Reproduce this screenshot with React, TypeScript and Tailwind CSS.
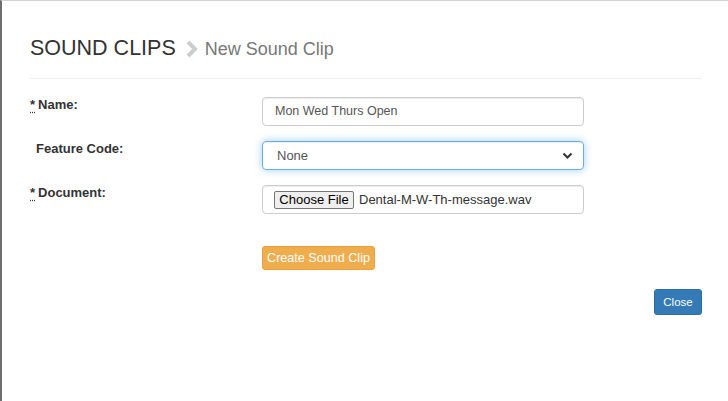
import React from "react";

const font = { fontFamily: '"Liberation Sans", Arial, sans-serif' };

const Req = () => (
  <abbr title="required" className="no-underline decoration-dotted underline underline-offset-[3px] mr-[3px]">
    *
  </abbr>
);

const App = () => {
  return (
    <div
      className="w-[728px] h-[401px] bg-white border-l-2 border-l-[#6e6e6e] border-t border-t-[#d2d2d2] text-[#333] overflow-hidden"
      style={font}
    >
      <div className="pl-[28px] pr-[26px]">
        {/* Titre */}
        <div className="h-[78px] pt-[34px] border-b border-[#eeeeee] flex items-start">
          <div className="flex items-center h-[26px]">
            <h3 className="text-[21.5px] leading-[26px] font-normal text-[#333]">SOUND CLIPS</h3>
            <svg width="14" height="18" viewBox="0 0 14 18" className="ml-[9px] mt-[1px]">
              <polyline points="3,2 10,9 3,16" fill="none" stroke="#cccccc" strokeWidth="4" />
            </svg>
            <span className="ml-[6px] text-[18px] leading-[26px] text-[#777] mt-[2px]">New Sound Clip</span>
          </div>
        </div>

        {/* Formulaire */}
        <div className="mt-[18px] flex flex-col gap-[15px]">
          <div className="flex">
            <label className="w-[232px] text-[13px] leading-[16px] font-bold">
              <Req />Name:
            </label>
            <div className="w-[322px] h-[29px] border border-[#ccc] rounded-[4px] px-[12px] flex items-center text-[12.5px] text-[#555] shadow-[inset_0_1px_1px_rgba(0,0,0,0.075)]">
              Mon Wed Thurs Open
            </div>
          </div>

          <div className="flex">
            <label className="w-[232px] pl-[6px] text-[13px] leading-[16px] font-bold">Feature Code:</label>
            <div className="w-[322px] h-[29px] border border-[#66afe9] rounded-[4px] pl-[14px] pr-[10px] flex items-center justify-between text-[13px] text-[#555] shadow-[inset_0_1px_1px_rgba(0,0,0,0.075),0_0_8px_rgba(102,175,233,0.6)]">
              <span>None</span>
              <svg width="11" height="8" viewBox="0 0 11 8">
                <polyline points="1.5,1.5 5.5,5.5 9.5,1.5" fill="none" stroke="#333" strokeWidth="2" />
              </svg>
            </div>
          </div>

          <div className="flex">
            <label className="w-[232px] text-[13px] leading-[16px] font-bold">
              <Req />Document:
            </label>
            <div className="w-[322px] h-[29px] border border-[#ccc] rounded-[4px] pl-[11px] flex items-center text-[13px] text-[#333] shadow-[inset_0_1px_1px_rgba(0,0,0,0.075)]">
              <span className="h-[18px] w-[80px] flex items-center justify-center bg-[#efefef] border border-[#767676] rounded-[2px] text-[13px] text-black">
                Choose File
              </span>
              <span className="ml-[5px]">Dental-M-W-Th-message.wav</span>
            </div>
          </div>
        </div>

        <div className="mt-[31px] pl-[232px]">
          <button className="h-[24px] w-[113px] bg-[#f0ad4e] border border-[#eea236] rounded-[3px] text-white text-[12.6px] leading-none">
            Create Sound Clip
          </button>
        </div>

        <div className="mt-[19px] flex justify-end">
          <button className="h-[26px] w-[48px] bg-[#337ab7] border border-[#2e6da4] rounded-[3px] text-white text-[11.5px] leading-none">
            Close
          </button>
        </div>
      </div>
    </div>
  );
};

export default App;
